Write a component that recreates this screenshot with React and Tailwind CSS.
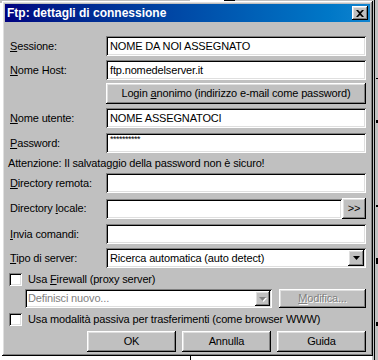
import React from 'react';

const sunken = 'shadow-[inset_1px_1px_#808080,inset_-1px_-1px_#ffffff,inset_2px_2px_#000000,inset_-2px_-2px_#dfdfdf]';
const raised = 'shadow-[inset_-1px_-1px_#000000,inset_1px_1px_#ffffff,inset_-2px_-2px_#808080,inset_2px_2px_#dfdfdf]';

function Row({ label, children, className = '' }) {
  return (
    <div className={`flex items-center ${className}`}>
      <div className="w-[96px] whitespace-nowrap">{label}</div>
      {children}
    </div>
  );
}

function Field({ children, className = 'w-[260px]' }) {
  return (
    <div className={`h-[20px] bg-white flex items-center pl-[4px] whitespace-nowrap overflow-hidden ${sunken} ${className}`}>
      {children}
    </div>
  );
}

function Arrow({ disabled }) {
  return (
    <svg width="7" height="4" viewBox="0 0 7 4" className={disabled ? 'drop-shadow-[1px_1px_0_#ffffff]' : ''}>
      <path d="M0 0h7L3.5 4z" fill={disabled ? '#808080' : '#000000'} />
    </svg>
  );
}

function Check({ children }) {
  return (
    <div className="flex items-center -ml-px">
      <div className={`w-[13px] h-[13px] bg-white ${sunken}`} />
      <span className="ml-[6px] whitespace-nowrap">{children}</span>
    </div>
  );
}

export default function App() {
  return (
    <div className="relative w-[378px] h-[360px] bg-white overflow-hidden text-[11px] tracking-[-0.15px] text-black font-['Liberation_Sans',Arial,sans-serif]">
      {/* windows behind the dialog */}
      <div className="absolute left-0 top-0 w-[378px] h-[3px] bg-[#c0c0c0]">
        <div className="absolute left-[190px] top-0 w-[34px] h-[2px] bg-white" />
        <div className="absolute left-[224px] top-0 w-[11px] h-[3px] bg-black" />
      </div>
      <div className="absolute right-0 top-0 w-[6px] h-[360px] bg-[#c0c0c0]">
        <div className="absolute left-[2px] top-0 w-px h-[360px] bg-black" />
        <div className="absolute left-[4px] top-[78px] w-[2px] h-px bg-black" />
        <div className="absolute left-[4px] top-[120px] w-[2px] h-[3px] bg-black" />
        <div className="absolute left-[4px] top-[205px] w-[2px] h-[2px] bg-black" />
        <div className="absolute left-[4px] top-[258px] w-[2px] h-[6px] bg-black" />
        <div className="absolute left-[4px] top-[322px] w-[2px] h-[4px] bg-black" />
      </div>
      <div className="absolute left-[190px] top-[356px] w-px h-[4px] bg-black" />

      {/* dialog */}
      <div className={`absolute left-[2px] top-[1px] w-[371px] h-[355px] bg-[#c0c0c0] p-[3px] ${raised}`}>
        <div className="h-[18px] flex items-center justify-between pl-[2px] pr-[2px] bg-gradient-to-r from-[#000080] to-[#1084d0]">
          <span className="text-white font-bold text-[12px] tracking-normal">Ftp: dettagli di connessione</span>
          <div className={`w-[16px] h-[14px] bg-[#c0c0c0] flex items-center justify-center ${raised}`}>
            <svg width="8" height="7" viewBox="0 0 8 7">
              <path d="M0 0h2l2 2 2-2h2L5 3.5 8 7H6L4 5 2 7H0l3-3.5z" fill="#000" />
            </svg>
          </div>
        </div>

        <div className="pt-[14px] pl-[5px] pr-[4px] flex flex-col">
          <Row label={<><u>S</u>essione:</>}>
            <Field>NOME DA NOI ASSEGNATO</Field>
          </Row>
          <Row className="mt-[4px]" label={<><u>N</u>ome Host:</>}>
            <Field>ftp.nomedelserver.it</Field>
          </Row>
          <div className="mt-[3px] ml-[96px]">
            <div className={`h-[21px] w-[260px] flex items-center justify-center whitespace-nowrap ${raised}`}>
              <span>Login <u>a</u>nonimo (indirizzo e-mail come password)</span>
            </div>
          </div>
          <Row className="mt-[4px]" label={<><u>N</u>ome utente:</>}>
            <Field>NOME ASSEGNATOCI</Field>
          </Row>
          <Row className="mt-[5px]" label={<><u>P</u>assword:</>}>
            <Field>
              <span className="text-[9px] -mt-[6px] tracking-[-0.5px]">**********</span>
            </Field>
          </Row>
          <div className="h-[20px] flex items-center -ml-[2px]">
            <span>Attenzione: Il salvataggio della password non è sicuro!</span>
          </div>
          <Row label={<><u>D</u>irectory remota:</>}>
            <Field />
          </Row>
          <Row className="mt-[5px]" label={<>Directory <u>l</u>ocale:</>}>
            <Field className="w-[236px]" />
            <div className={`h-[21px] w-[24px] flex items-center justify-center ${raised}`}>&gt;&gt;</div>
          </Row>
          <Row className="mt-[5px]" label={<><u>I</u>nvia comandi:</>}>
            <Field />
          </Row>
          <Row className="mt-[4px]" label={<><u>T</u>ipo di server:</>}>
            <Field>
              <span className="flex-1">Ricerca automatica (auto detect)</span>
              <div className={`w-[16px] h-[16px] mr-[2px] bg-[#c0c0c0] flex items-center justify-center ${raised}`}>
                <Arrow />
              </div>
            </Field>
          </Row>
          <div className="mt-[5px] h-[13px] flex items-center">
            <Check>Usa <u>F</u>irewall (proxy server)</Check>
          </div>
          <div className="mt-[3px] h-[19px] flex items-center">
            <div className={`ml-[15px] w-[247px] h-[19px] bg-white flex items-center pl-[3px] ${sunken}`}>
              <span className="flex-1 text-[#808080]">Definisci nuovo...</span>
              <div className={`w-[15px] h-[15px] mr-[2px] bg-[#c0c0c0] flex items-center justify-center ${raised}`}>
                <Arrow disabled />
              </div>
            </div>
            <div className={`ml-[7px] w-[87px] h-[19px] flex items-center justify-center text-[#808080] [text-shadow:1px_1px_0_#ffffff] ${raised}`}>
              <span><u>M</u>odifica...</span>
            </div>
          </div>
          <div className="mt-[5px] h-[13px] flex items-center">
            <Check>Usa modalità passiva per trasferimenti (come browser WWW)</Check>
          </div>
          <div className="mt-[5px] flex justify-end gap-[6px]">
            {['OK', 'Annulla', 'Guida'].map((b) => (
              <div key={b} className={`w-[89px] h-[21px] flex items-center justify-center ${raised}`}>{b}</div>
            ))}
          </div>
        </div>
      </div>
    </div>
  );
}
